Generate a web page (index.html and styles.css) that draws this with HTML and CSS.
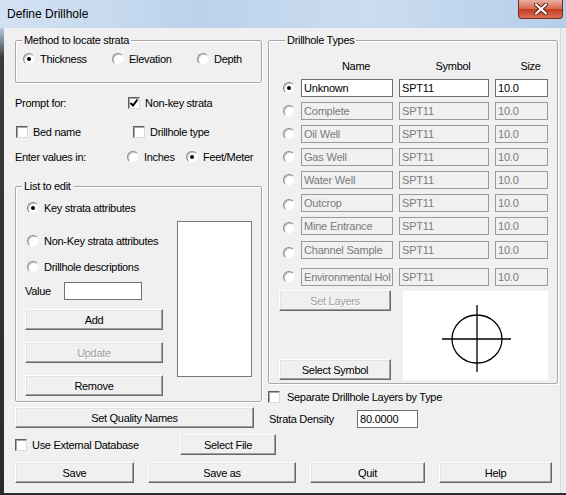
FILE: index.html
```html
<!DOCTYPE html>
<html lang="en">
<head>
  <meta charset="UTF-8">
  <title>Define Drillhole</title>
  <link rel="stylesheet" href="styles.css">
</head>
<body>
  <div class="window">
    <div class="titlebar">
      <span class="title">Define Drillhole</span>
      <div class="close">
        <svg width="16" height="12" viewBox="0 0 16 12">
          <path d="M3 1.5 L13 10.5 M13 1.5 L3 10.5" stroke="#5a1a10" stroke-width="4" stroke-linecap="round"/>
          <path d="M3 1.5 L13 10.5 M13 1.5 L3 10.5" stroke="#fff" stroke-width="2.2" stroke-linecap="round"/>
        </svg>
      </div>
    </div>

    <div class="frame">
      <div class="frame-left"></div>
      <div class="client">
        <div class="columns">
          <div class="col-left">
            <fieldset class="group method">
              <legend>Method to locate strata</legend>
              <div class="method-row">
                <label class="opt"><span class="radio on"></span>Thickness</label>
                <label class="opt"><span class="radio"></span>Elevation</label>
                <label class="opt"><span class="radio"></span>Depth</label>
              </div>
            </fieldset>

            <div class="line prompt">
              <span>Prompt for:</span>
              <label class="opt"><span class="check on"><svg width="10" height="10" viewBox="0 0 10 10"><path d="M1.5 5 L4 7.5 L8.5 1.5" stroke="#000" stroke-width="2" fill="none"/></svg></span>Non-key strata</label>
            </div>
            <div class="line beds">
              <label class="opt"><span class="check"></span>Bed name</label>
              <label class="opt"><span class="check"></span>Drillhole type</label>
            </div>
            <div class="line units">
              <span>Enter values in:</span>
              <label class="opt"><span class="radio"></span>Inches</label>
              <label class="opt"><span class="radio on"></span>Feet/Meter</label>
            </div>

            <fieldset class="group list">
              <legend>List to edit</legend>
              <div class="list-body">
                <div class="list-left">
                  <label class="opt pick"><span class="radio on"></span>Key strata attributes</label>
                  <label class="opt pick nonkey"><span class="radio"></span>Non-Key strata attributes</label>
                  <label class="opt pick desc"><span class="radio"></span>Drillhole descriptions</label>
                  <div class="value-row">
                    <span class="value-label">Value</span>
                    <input class="field value" type="text">
                  </div>
                  <button class="btn wide add">Add</button>
                  <button class="btn wide step" disabled>Update</button>
                  <button class="btn wide step">Remove</button>
                </div>
                <div class="listbox"></div>
              </div>
            </fieldset>

            <button class="btn quality">Set Quality Names</button>
          </div>

          <div class="col-right">
            <fieldset class="group types">
              <legend>Drillhole Types</legend>
              <div class="trow head">
                <span></span><span>Name</span><span>Symbol</span><span>Size</span>
              </div>
              <div class="trow first">
                <span class="radio on"></span>
                <input class="field" type="text" value="Unknown">
                <input class="field" type="text" value="SPT11">
                <input class="field" type="text" value="10.0">
              </div>
              <div class="trow">
                <span class="radio"></span>
                <input class="field" type="text" value="Complete" disabled>
                <input class="field" type="text" value="SPT11" disabled>
                <input class="field" type="text" value="10.0" disabled>
              </div>
              <div class="trow">
                <span class="radio"></span>
                <input class="field" type="text" value="Oil Well" disabled>
                <input class="field" type="text" value="SPT11" disabled>
                <input class="field" type="text" value="10.0" disabled>
              </div>
              <div class="trow">
                <span class="radio"></span>
                <input class="field" type="text" value="Gas Well" disabled>
                <input class="field" type="text" value="SPT11" disabled>
                <input class="field" type="text" value="10.0" disabled>
              </div>
              <div class="trow">
                <span class="radio"></span>
                <input class="field" type="text" value="Water Well" disabled>
                <input class="field" type="text" value="SPT11" disabled>
                <input class="field" type="text" value="10.0" disabled>
              </div>
              <div class="trow">
                <span class="radio low"></span>
                <input class="field" type="text" value="Outcrop" disabled>
                <input class="field" type="text" value="SPT11" disabled>
                <input class="field" type="text" value="10.0" disabled>
              </div>
              <div class="trow">
                <span class="radio low"></span>
                <input class="field" type="text" value="Mine Entrance" disabled>
                <input class="field" type="text" value="SPT11" disabled>
                <input class="field" type="text" value="10.0" disabled>
              </div>
              <div class="trow">
                <span class="radio lower"></span>
                <input class="field" type="text" value="Channel Sample" disabled>
                <input class="field" type="text" value="SPT11" disabled>
                <input class="field" type="text" value="10.0" disabled>
              </div>
              <div class="trow spaced">
                <span class="radio"></span>
                <input class="field" type="text" value="Environmental Hole" disabled>
                <input class="field" type="text" value="SPT11" disabled>
                <input class="field" type="text" value="10.0" disabled>
              </div>

              <div class="lower-area">
                <div class="symbol-buttons">
                  <button class="btn" disabled>Set Layers</button>
                  <button class="btn">Select Symbol</button>
                </div>
                <div class="preview">
                  <svg width="145" height="89" viewBox="0 0 145 89">
                    <ellipse cx="74" cy="48" rx="25" ry="24" fill="none" stroke="#000" stroke-width="1.3"/>
                    <path d="M39 48 H108 M74 14 V81" stroke="#000" stroke-width="1.3"/>
                  </svg>
                </div>
              </div>
            </fieldset>

            <label class="opt separate"><span class="check"></span>Separate Drillhole Layers by Type</label>
            <div class="density">
              <span class="density-label">Strata Density</span>
              <input class="field" type="text" value="80.0000">
            </div>
          </div>
        </div>

        <div class="external">
          <label class="opt"><span class="check"></span>Use External Database</label>
          <button class="btn file">Select File</button>
        </div>

        <div class="actions">
          <button class="btn save">Save</button>
          <button class="btn saveas">Save as</button>
          <button class="btn quit">Quit</button>
          <button class="btn help">Help</button>
        </div>
      </div>
      <div class="frame-right"></div>
    </div>
  </div>
</body>
</html>
```

FILE: styles.css
```css
body {
  margin: 0;
  font-family: "Liberation Sans", Arial, sans-serif;
  font-size: 11px;
  letter-spacing: -0.3px;
  color: #000;
  background: #f0f0f0;
}
.window {
  width: 566px;
  height: 495px;
  display: flex;
  flex-direction: column;
  overflow: hidden;
}
.titlebar {
  height: 28px;
  flex: none;
  display: flex;
  justify-content: space-between;
  align-items: flex-start;
  background: linear-gradient(90deg, #d3e2f3, #bcd2eb 35%, #cadcf0 65%, #b6cee9);
}
.title {
  margin: 7px 0 0 7px;
  font-size: 12px;
  line-height: 14px;
  letter-spacing: 0;
}
.close {
  width: 43px;
  height: 18px;
  margin-right: 3px;
  border: 1px solid #7a2a1c;
  border-top: none;
  border-radius: 0 0 4px 4px;
  background: linear-gradient(#eab0a2, #d76a52 48%, #c23b20 52%, #d9735a);
  display: flex;
  align-items: center;
  justify-content: center;
}
.frame {
  flex: 1;
  display: flex;
  border-bottom: 2px solid #2b2b2b;
}
.frame-left {
  width: 4px;
  background: linear-gradient(#b5c9e1, #3a3a3a 30px, #2b2b2b);
}
.frame-right {
  width: 5px;
  background: #e9edf2;
  border-left: 1px solid #d3d9e0;
}
.client {
  flex: 1;
  padding: 0 2px 0 11px;
  background: #f0f0f0;
}
.columns {
  display: grid;
  grid-template-columns: 247px 290px;
  column-gap: 6px;
}

/* group boxes */
.group {
  margin: 6px 0 0;
  padding: 0;
  min-width: 0;
  border: 1px solid #a9a9a9;
  border-radius: 2px;
  box-shadow: inset 1px 1px #fff, 1px 1px #fff;
}
.group legend {
  margin-left: 6px;
  padding: 0 2px;
  line-height: 13px;
  background: #f0f0f0;
}

/* radios and checkboxes */
.opt {
  display: flex;
  align-items: center;
  gap: 5px;
  height: 14px;
  white-space: nowrap;
}
.radio {
  position: relative;
  width: 12px;
  height: 12px;
  box-sizing: border-box;
  flex: none;
  border-radius: 50%;
  border: 1px solid;
  border-color: #8a8a8a #f4f4f4 #f4f4f4 #8a8a8a;
  background: #fff;
  box-shadow: inset 1px 1px #c8c8c8;
}
.radio.on::after {
  content: "";
  position: absolute;
  left: 3px;
  top: 3px;
  width: 4px;
  height: 4px;
  border-radius: 50%;
  background: #000;
}
.check {
  width: 12px;
  height: 12px;
  box-sizing: border-box;
  flex: none;
  border: 1px solid;
  border-color: #5e5e5e #dadada #dadada #5e5e5e;
  box-shadow: inset 1px 1px #a8a8a8;
  background: #fff;
  display: flex;
  align-items: center;
  justify-content: center;
}

/* inputs and buttons */
.field {
  height: 18px;
  width: 100%;
  box-sizing: border-box;
  margin: 0;
  padding: 0 1px 0 2px;
  border: 1px solid #6f6f6f;
  background: #fff;
  font: inherit;
  letter-spacing: -0.2px;
  color: #000;
}
.field:disabled {
  background: #f0f0f0;
  color: #7b7b7b;
  border-color: #9a9a9a;
}
.btn {
  height: 21px;
  margin: 0;
  padding: 0;
  font: inherit;
  letter-spacing: inherit;
  color: #000;
  background: #f0f0f0;
  border: 1px solid;
  border-color: #fff #696969 #696969 #fff;
  box-shadow: inset -1px -1px #a0a0a0, inset 1px 1px #e3e3e3;
}
.btn:disabled {
  color: #a0a0a0;
  text-shadow: 1px 1px #fff;
}

/* left column */
.method-row {
  display: grid;
  grid-template-columns: 89px 85px auto;
  padding: 5px 0 16px 7px;
}
.line {
  display: grid;
  align-items: center;
  height: 14px;
}
.prompt {
  margin-top: 13px;
  grid-template-columns: 113px auto;
}
.beds {
  margin-top: 15px;
  padding-left: 1px;
  grid-template-columns: 117px auto;
}
.units {
  margin-top: 11px;
  grid-template-columns: 112px 59px auto;
}
.list {
  margin-top: 16px;
}
.list-body {
  display: flex;
  gap: 14px;
  padding: 8px 0 5px 9px;
}
.list-left {
  width: 138px;
  display: flex;
  flex-direction: column;
}
.pick {
  padding-left: 2px;
}
.nonkey {
  margin-top: 19px;
}
.desc {
  margin-top: 12px;
}
.value-row {
  display: flex;
  align-items: center;
  margin-top: 8px;
}
.value-label {
  width: 39px;
}
.field.value {
  width: 78px;
}
.add {
  margin-top: 9px;
}
.step {
  margin-top: 12px;
}
.listbox {
  width: 75px;
  height: 156px;
  margin-top: 20px;
  box-sizing: border-box;
  border: 1px solid #7a7a7a;
  background: #fff;
}
.quality {
  width: 239px;
  margin-top: 5px;
}

/* right column */
.types {
  padding: 12px 9px 3px 10px;
}
.trow {
  display: grid;
  grid-template-columns: 16px 92px 90px 53px;
  column-gap: 6px;
  align-items: center;
  height: 18px;
  margin-top: 5px;
}
.trow .radio {
  justify-self: end;
  margin-top: -1px;
}
.trow .radio.low {
  margin-top: 4px;
}
.trow .radio.lower {
  margin-top: 7px;
}
.trow.head {
  height: 14px;
  margin-top: 0;
}
.trow.head span {
  text-align: center;
  padding-left: 18px;
}
.trow.first {
  margin-top: 6px;
}
.trow.spaced {
  margin-top: 10px;
}
.lower-area {
  display: flex;
  gap: 12px;
  margin-top: 4px;
}
.symbol-buttons {
  width: 112px;
  display: flex;
  flex-direction: column;
  justify-content: space-between;
}
.preview {
  width: 145px;
  height: 89px;
  margin-top: 1px;
  background: #fff;
}
.preview svg {
  display: block;
}
.separate {
  margin-top: 6px;
  gap: 7px;
}
.density {
  display: flex;
  align-items: center;
  margin-top: 6px;
}
.density-label {
  width: 88px;
  padding-left: 1px;
}
.density .field {
  width: 61px;
}

/* bottom rows */
.external {
  display: grid;
  grid-template-columns: 165px 96px;
  align-items: center;
  margin-top: 6px;
}
.actions {
  display: flex;
  justify-content: space-between;
  width: 537px;
  margin-top: 7px;
}
.save { width: 119px; }
.saveas { width: 148px; }
.quit { width: 115px; }
.help { width: 113px; }
```
